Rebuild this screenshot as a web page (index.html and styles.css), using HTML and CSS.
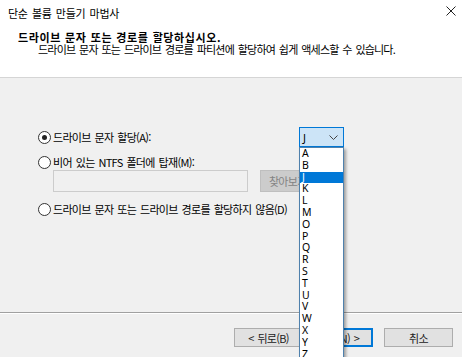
FILE: index.html
```html
<!DOCTYPE html>
<html lang="ko">
<head>
  <meta charset="UTF-8" />
  <title>단순 볼륨 만들기 마법사</title>
  <link rel="stylesheet" href="styles.css">
</head>
<body>
  <div class="window">
    <div class="top">
      <div class="titlebar">
        <span class="title">단순 볼륨 만들기 마법사</span>
        <svg class="close" width="10" height="10" viewBox="0 0 10 10">
          <path d="M0.5 0.5 L9.5 9.5 M9.5 0.5 L0.5 9.5" stroke="#222" stroke-width="1" fill="none"/>
        </svg>
      </div>
      <div class="head">
        <div class="head-title">드라이브 문자 또는 경로를 할당하십시오.</div>
        <div class="head-sub">드라이브 문자 또는 드라이브 경로를 파티션에 할당하여 쉽게 액세스할 수 있습니다.</div>
      </div>
    </div>

    <div class="content">
      <div class="row row-first">
        <label class="choice"><span class="radio checked"></span>드라이브 문자 할당(A):</label>
        <div class="combo">
          <div class="combo-box">
            <span>J</span>
            <svg width="9" height="5" viewBox="0 0 9 5"><path d="M0.5 0.5 L4.5 4.5 L8.5 0.5" stroke="#444" fill="none"/></svg>
          </div>
          <ul class="combo-list">
            <li>A</li><li>B</li><li class="sel">J</li><li>K</li><li>L</li><li>M</li>
            <li>O</li><li>P</li><li>Q</li><li>R</li><li>S</li><li>T</li>
            <li>U</li><li>V</li><li>W</li><li>X</li><li>Y</li><li>Z</li>
          </ul>
        </div>
      </div>
      <div class="row row-second">
        <label class="choice"><span class="radio"></span>비어 있는 NTFS 폴더에 탑재(M):</label>
      </div>
      <div class="path-row">
        <div class="path-input"></div>
        <div class="btn btn-disabled">찾아보기(R)...</div>
      </div>
      <div class="row row-third">
        <label class="choice"><span class="radio"></span>드라이브 문자 또는 드라이브 경로를 할당하지 않음(D)</label>
      </div>
    </div>

    <div class="footer">
      <div class="btn-pair">
        <div class="btn">&lt; 뒤로(B)</div>
        <div class="btn btn-default">다음(N) &gt;</div>
      </div>
      <div class="btn">취소</div>
    </div>
  </div>
</body>
</html>
```

FILE: styles.css
```css
html, body {
  margin: 0;
  padding: 0;
}

body {
  font-family: "Noto Sans CJK KR", "Noto Sans", sans-serif;
  font-size: 11px;
  letter-spacing: -0.7px;
  word-spacing: 1.5px;
  color: #000;
  background: #f0f0f0;
}

.window {
  width: 462px;
  height: 357px;
  overflow: hidden;
  display: flex;
  flex-direction: column;
}

.top {
  background: #fff;
  height: 77px;
  border-bottom: 1px solid #d5d5d5;
}

.titlebar {
  height: 26px;
  display: flex;
  align-items: center;
  justify-content: space-between;
  padding: 0 6px 0 8px;
}

.title {
  line-height: 14px;
  letter-spacing: -0.3px;
}

.close {
  margin-top: -4px;
}

.head {
  padding: 6px 0 0 18px;
  line-height: 11.5px;
}

.head-title {
  font-weight: bold;
  letter-spacing: 0.6px;
  word-spacing: 0.5px;
}

.head-sub {
  padding-left: 20px;
  letter-spacing: -0.8px;
}

.content {
  height: 234px;
  padding-left: 38px;
  border-bottom: 1px solid #a0a0a0;
  box-shadow: 0 1px 0 #fff;
}

.row {
  display: flex;
  align-items: center;
}

.row-first {
  margin-top: 49px;
  height: 20px;
}

.row-second {
  margin-top: 7px;
  height: 16px;
}

.row-third {
  margin-top: 9px;
  height: 16px;
}

.choice {
  flex: 0 0 261px;
  display: flex;
  align-items: center;
  gap: 2px;
}

.radio {
  width: 11px;
  height: 11px;
  border: 1px solid #333;
  border-radius: 50%;
  background: #fff;
  position: relative;
  box-sizing: content-box;
}

.radio.checked::after {
  content: "";
  position: absolute;
  left: 3px;
  top: 3px;
  width: 5px;
  height: 5px;
  border-radius: 50%;
  background: #222;
}

.combo {
  position: relative;
  width: 45px;
}

.combo-box {
  height: 18px;
  border: 1px solid #0078d7;
  background: #cce4f7;
  display: flex;
  align-items: center;
  justify-content: space-between;
  padding: 0 5px 0 3px;
  font-family: "Noto Sans", sans-serif;
  letter-spacing: 0;
}

.combo-list {
  position: absolute;
  top: 20px;
  left: 0;
  width: 43px;
  margin: 0;
  padding: 0;
  list-style: none;
  background: #fff;
  border: 1px solid #4f81ad;
  box-shadow: 2px 2px 3px rgba(0, 0, 0, 0.35);
  font-family: "Noto Sans", sans-serif;
  font-size: 10.5px;
  letter-spacing: 0;
  z-index: 2;
}

.combo-list li {
  height: 11.8px;
  line-height: 11.8px;
  padding-left: 2px;
}

.combo-list li.sel {
  background: #0078d7;
  color: #fff;
}

.path-row {
  display: flex;
  gap: 12px;
  margin: 0 0 0 15px;
  height: 22px;
}

.path-input {
  width: 193px;
  border: 1px solid #cccccc;
  background: #f0f0f0;
}

.btn {
  width: 67px;
  height: 17px;
  border: 1px solid #adadad;
  background: #e1e1e1;
  display: flex;
  align-items: center;
  justify-content: center;
  white-space: nowrap;
  color: #222;
}

.btn-disabled {
  width: 73px;
  height: 20px;
  border-color: #bfbfbf;
  background: #cccccc;
  color: #838383;
}

.btn-default {
  border: 1px solid #0078d7;
  box-shadow: inset 0 0 0 1px #0078d7;
}

.footer {
  flex: 1;
  display: flex;
  justify-content: flex-end;
  align-items: flex-start;
  padding: 15px 9px 0 0;
  gap: 11px;
}

.btn-pair {
  display: flex;
  gap: 1px;
}
```
